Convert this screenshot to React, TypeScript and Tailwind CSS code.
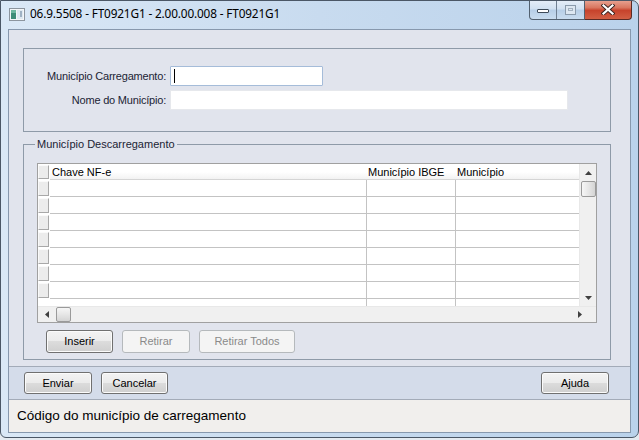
import React from "react";

const F = "font-['Liberation_Sans',Arial,sans-serif]";

function Btn({ label, w, h, disabled }: { label: string; w: string; h: string; disabled?: boolean }) {
  if (disabled) {
    return (
      <div className={`${w} ${h} rounded-[3px] border border-[#b5b9bc] bg-[#f4f4f4] text-[#8a8a8a] text-[11px] flex items-center justify-center`}>
        {label}
      </div>
    );
  }
  return (
    <div
      className={`${w} ${h} rounded-[3px] border border-[#707070] bg-[linear-gradient(#f3f3f3_0%,#ebebeb_50%,#dcdcdc_50%,#cfcfcf_100%)] shadow-[inset_0_0_0_1px_#fbfbfb] text-black text-[11px] flex items-center justify-center`}
    >
      {label}
    </div>
  );
}

function RowHdr({ h }: { h: string }) {
  return (
    <div className={`w-[12px] ${h} flex items-stretch pr-[1px] py-[1px] bg-white`}>
      <div className="flex-1 bg-[#ececec] border-l border-t border-l-[#fafafa] border-t-[#fafafa] border-r border-b border-r-[#a8a8a8] border-b-[#a8a8a8]" />
    </div>
  );
}

function DataRow() {
  return (
    <div className="flex h-[17px]">
      <RowHdr h="h-[17px]" />
      <div className="w-[317px] border-r border-b border-[#c3c3c3]" />
      <div className="w-[89px] border-r border-b border-[#c3c3c3]" />
      <div className="w-[123px] border-b border-[#c3c3c3]" />
    </div>
  );
}

export default function App() {
  return (
    <div className={`w-[639px] h-[440px] bg-[#e4eaf0] overflow-hidden ${F}`}>
      <div className="w-[639px] h-[438px] border border-[#4b5766] rounded-tr-[7px] rounded-br-[7px] rounded-bl-[6px] bg-[linear-gradient(90deg,#dae8f6_0%,#c8dbef_50%,#bad2eb_100%)] flex flex-col overflow-hidden">
        {/* Title bar */}
        <div className="h-[28px] flex items-start">
          <div className="flex items-center h-[26px] pl-[8px]">
            <svg width="16" height="13" viewBox="0 0 16 13" className="mt-[1px]">
              <rect x="0.5" y="0.5" width="15" height="12" fill="#f4f6f8" stroke="#8c959e" />
              <rect x="2" y="2" width="5" height="9" fill="#3e8d78" />
              <rect x="2" y="2" width="5" height="3" fill="#6fb7a0" />
              <rect x="8" y="2" width="6" height="9" fill="#dfe9f1" />
              <rect x="11" y="3" width="2" height="6" fill="#9fb2c4" />
            </svg>
            <span className="ml-[5px] text-[11.8px] text-black tracking-[-0.15px] font-['Noto_Sans',sans-serif]">
              06.9.5508 - FT0921G1 - 2.00.00.008 - FT0921G1
            </span>
          </div>
          <div className="ml-auto mr-[6px] flex h-[20px] -mt-[1px]">
            <div className="flex border border-t-0 border-[#52606f] rounded-bl-[4px] bg-[linear-gradient(#e6eef8_0%,#d2e1f1_45%,#b8cfe7_55%,#c9dcef_100%)] overflow-hidden">
              <div className="w-[27px] h-[19px] flex items-center justify-center border-r border-[#6f7f91]">
                <div className="w-[12px] h-[4px] mt-[3px] bg-white border border-[#3d4a58] rounded-[1px]" />
              </div>
              <div className="w-[27px] h-[19px] flex items-center justify-center">
                <div className="w-[11px] h-[10px] border border-[#8a9aab] bg-[#dde7f1] flex items-center justify-center">
                  <div className="w-[5px] h-[3px] border border-[#a3b1bf]" />
                </div>
              </div>
            </div>
            <div className="w-[47px] h-[20px] border border-t-0 border-l-0 border-[#5b2a24] rounded-br-[4px] bg-[linear-gradient(#e9a695_0%,#d97760_40%,#c7432c_55%,#d25f44_100%)] flex items-center justify-center">
              <svg width="14" height="11" viewBox="0 0 14 11">
                <path d="M2.5 1.5 L11.5 9.5 M11.5 1.5 L2.5 9.5" stroke="#3b2420" strokeWidth="4" strokeLinecap="square" />
                <path d="M2.5 1.5 L11.5 9.5 M11.5 1.5 L2.5 9.5" stroke="#ffffff" strokeWidth="2.2" strokeLinecap="square" />
              </svg>
            </div>
          </div>
        </div>

        {/* Client */}
        <div className="ml-[7px] w-[623px] h-[404px] border border-[#8798ad] bg-[#e1e4ed] flex flex-col text-[11px] text-[#1b2334]">
          <div className="pl-[14px] pr-[19px] pt-[18px]">
            {/* Group 1 */}
            <div className="h-[84px] border border-[#8e9aa8] pt-[17px] flex flex-col gap-[4px]">
              <div className="flex items-center h-[20px]">
                <div className="w-[143px] text-right pr-[1px] tracking-[-0.2px]">Município Carregamento:</div>
                <div className="ml-[3px] w-[153px] h-[20px] bg-white border border-[#a5bcd9] rounded-[1px] flex items-center">
                  <div className="ml-[3px] w-[1px] h-[14px] bg-black" />
                </div>
              </div>
              <div className="flex items-center h-[20px]">
                <div className="w-[143px] text-right pr-[1px] tracking-[-0.2px]">Nome do Município:</div>
                <div className="ml-[3px] w-[398px] h-[20px] bg-white border border-[#e6e8ec]" />
              </div>
            </div>

            {/* Group 2 */}
            <div className="mt-[12px] h-[216px] border border-[#8e9aa8] relative pt-[18px] px-[13px]">
              <span className="absolute left-[11px] -top-[8px] px-[2px] bg-[#e1e4ed] leading-[14px]">
                Município Descarregamento
              </span>
              {/* Grid */}
              <div className="h-[160px] border border-[#a0a0a0] bg-white flex flex-col">
                <div className="flex">
                  <div className="flex flex-col">
                    {/* header */}
                    <div className="flex h-[16px] bg-[linear-gradient(#ffffff_0%,#ffffff_50%,#f1f1f1_100%)] text-black">
                      <RowHdr h="h-[16px]" />
                      <div className="w-[317px] border-b border-[#d5d5d5] pl-[2px] leading-[16px]">Chave NF-e</div>
                      <div className="w-[89px] border-b border-[#d5d5d5] pl-[1px] leading-[16px]">Município IBGE</div>
                      <div className="w-[123px] border-b border-[#d5d5d5] pl-[1px] leading-[16px]">Município</div>
                    </div>
                    <DataRow />
                    <DataRow />
                    <DataRow />
                    <DataRow />
                    <DataRow />
                    <DataRow />
                    <DataRow />
                    <div className="flex h-[7px]">
                      <div className="w-[12px]" />
                      <div className="w-[317px] border-r border-[#c3c3c3]" />
                      <div className="w-[89px] border-r border-[#c3c3c3]" />
                      <div className="w-[123px]" />
                    </div>
                  </div>
                  {/* vertical scrollbar */}
                  <div className="w-[17px] h-[142px] bg-[#f0f0f0] border-l border-[#e8e8e8] flex flex-col items-center">
                    <div className="h-[17px] flex items-center justify-center">
                      <svg width="7" height="4" viewBox="0 0 7 4"><path d="M0 4 L3.5 0 L7 4 Z" fill="#404040" /></svg>
                    </div>
                    <div className="w-[15px] h-[16px] rounded-[2px] border border-[#9a9a9a] bg-[linear-gradient(90deg,#f6f6f6_0%,#e6e6e6_50%,#d4d4d4_100%)]" />
                    <div className="flex-1" />
                    <div className="h-[17px] flex items-center justify-center">
                      <svg width="7" height="4" viewBox="0 0 7 4"><path d="M0 0 L7 0 L3.5 4 Z" fill="#404040" /></svg>
                    </div>
                  </div>
                </div>
                {/* horizontal scrollbar */}
                <div className="h-[16px] bg-[#f0f0f0] border-t border-[#e8e8e8] flex items-center">
                  <div className="w-[17px] flex items-center justify-center">
                    <svg width="4" height="7" viewBox="0 0 4 7"><path d="M4 0 L0 3.5 L4 7 Z" fill="#404040" /></svg>
                  </div>
                  <div className="ml-[1px] w-[15px] h-[15px] rounded-[2px] border border-[#9a9a9a] bg-[linear-gradient(#f6f6f6_0%,#e6e6e6_50%,#d4d4d4_100%)]" />
                  <div className="flex-1" />
                  <div className="w-[17px] flex items-center justify-center">
                    <svg width="4" height="7" viewBox="0 0 4 7"><path d="M0 0 L4 3.5 L0 7 Z" fill="#404040" /></svg>
                  </div>
                  <div className="w-[8px]" />
                </div>
              </div>
              {/* buttons */}
              <div className="mt-[7px] pl-[9px] flex gap-[9px]">
                <Btn label="Inserir" w="w-[67px]" h="h-[23px]" />
                <Btn label="Retirar" w="w-[68px]" h="h-[23px]" disabled />
                <Btn label="Retirar Todos" w="w-[96px]" h="h-[23px]" disabled />
              </div>
            </div>
          </div>

          {/* bottom button bar */}
          <div className="mt-[6px] h-[33px] border-t border-[#a3abb8] bg-[#d4dcea] flex items-start pt-[5px] pl-[15px] pr-[21px]">
            <Btn label="Enviar" w="w-[68px]" h="h-[22px]" />
            <div className="w-[9px]" />
            <Btn label="Cancelar" w="w-[67px]" h="h-[22px]" />
            <div className="ml-auto">
              <Btn label="Ajuda" w="w-[68px]" h="h-[22px]" />
            </div>
          </div>

          {/* status bar */}
          <div className="flex-1 border-t border-[#a3abb8] bg-[#f1efed] flex items-center pl-[8px] text-[13.5px] text-black">
            Código do município de carregamento
          </div>
        </div>
      </div>
    </div>
  );
}
